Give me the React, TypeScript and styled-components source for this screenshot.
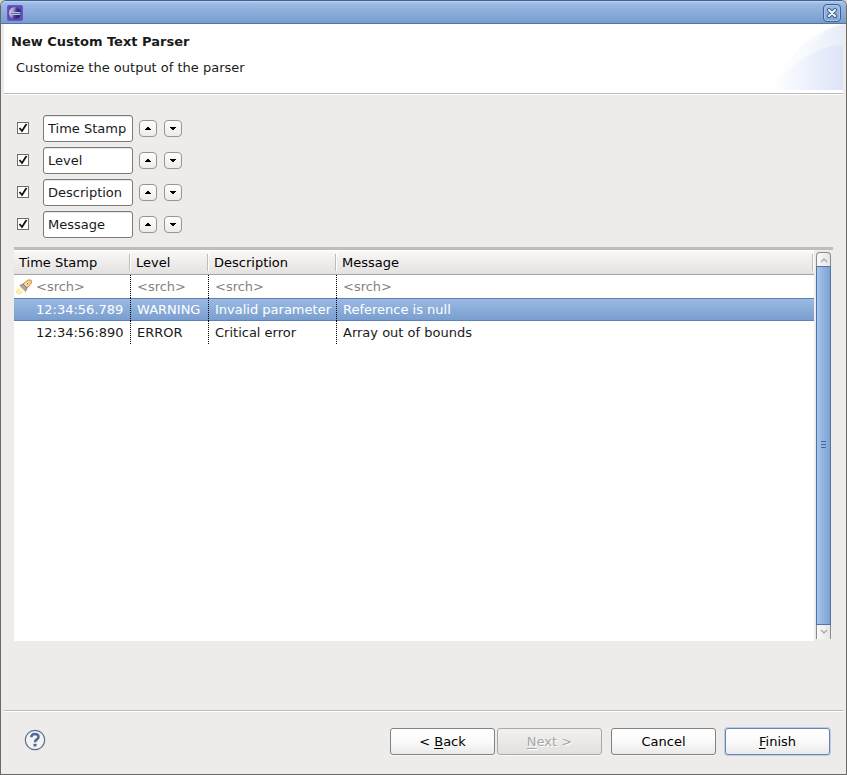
import React, { useState } from "react";
import styled, { createGlobalStyle, css } from "styled-components";

const GlobalStyle = createGlobalStyle`
  *, *::before, *::after { box-sizing: border-box; }
  body { margin: 0; background: #d8d4d0; }
  body, button, input, table {
    font-family: "DejaVu Sans", sans-serif;
    font-size: 13px;
    line-height: 16px;
    color: #1a1a1a;
  }
`;

const Dialog = styled.div`
  display: flex;
  flex-direction: column;
  min-height: 100vh;
  background: #edeceb;
  border: 1px solid #6b6967;
  border-top-color: #45618a;
  border-radius: 6px 6px 0 0;
  overflow: hidden;
`;

const TitleBar = styled.header`
  display: flex;
  align-items: center;
  justify-content: space-between;
  height: 23px;
  padding: 0 5px 0 6px;
  background: linear-gradient(#a5c3ec, #98b8e2 3px, #789dce);
  border-top: 1px solid #b9d0f0;
  border-bottom: 1px solid #4f76ac;
`;

const CloseButton = styled.button`
  display: flex;
  align-items: center;
  justify-content: center;
  width: 18px;
  height: 18px;
  padding: 0;
  background: linear-gradient(#9dbce6, #7fa3d4);
  border: 1px solid #41628f;
  border-radius: 4px;
  box-shadow: inset 0 0 0 1px #a9c5eb;
`;

const Body = styled.main`
  display: flex;
  flex: 1;
  flex-direction: column;
  margin: 0 3px;
`;

const Banner = styled.section`
  display: flex;
  justify-content: space-between;
  height: 70px;
  background: #fff;
  border-bottom: 1px solid #bcbab8;
  box-shadow: 0 1px #fff;
`;

const BannerText = styled.div`
  padding: 10px 0 0 7px;
`;

const Heading = styled.h1`
  margin: 0;
  font-size: 13px;
  line-height: 16px;
`;

const Subtitle = styled.p`
  margin: 10px 0 0 5px;
`;

const Columns = styled.section`
  display: flex;
  flex-direction: column;
  gap: 5px;
  padding: 21px 0 0 13px;
`;

const ColumnRow = styled.div`
  display: flex;
  align-items: center;
  height: 27px;
`;

const Tick = styled.input`
  appearance: none;
  width: 12px;
  height: 12px;
  margin: 0;
  background: #fff;
  border: 1px solid #6f6d6b;
`;

const TickBox = styled.span`
  display: grid;
  flex: none;
  width: 26px;
  margin-bottom: 2px;

  > * { grid-area: 1 / 1; }
  > svg { pointer-events: none; }
  input:not(:checked) + svg { visibility: hidden; }
`;

const NameInput = styled.input`
  width: 90px;
  height: 27px;
  padding: 0 4px;
  background: #fff;
  border: 1px solid #7b7977;
  border-radius: 3px;
  outline: none;
  box-shadow: inset 0 1px #e6e5e4;
`;

const ArrowButton = styled.button`
  display: flex;
  align-items: center;
  justify-content: center;
  width: 18px;
  height: 17px;
  margin: 0 0 1px 7px;
  padding: 0;
  background: linear-gradient(#fff, #ecebea);
  border: 1px solid #979593;
  border-radius: 4px;

  &:first-of-type { margin-left: 6px; }
`;

const Preview = styled.section`
  display: flex;
  flex: 1;
  flex-direction: column;
  margin: 9px 10px 69px;
  border-top: 3px solid #bebdbc;
`;

const PreviewBody = styled.div`
  display: flex;
  flex: 1;
`;

const TableArea = styled.div`
  flex: 1;
  background: #fff;
`;

const Grid = styled.table`
  width: 100%;
  table-layout: fixed;
  border-collapse: separate;
  border-spacing: 0;
`;

const HeadCell = styled.th`
  height: 25px;
  padding: 2px 5px 0;
  font-weight: 400;
  text-align: left;
  color: #000;
  background:
    linear-gradient(#bfbdbb, #bfbdbb) right 1px top 4px / 1px 17px no-repeat,
    linear-gradient(#fff, #fff) right top 4px / 1px 17px no-repeat,
    linear-gradient(#fff 1px, #f8f7f6 2px, #e4e2e0);
  border-bottom: 1px solid #a5a3a0;
`;

const Cell = styled.td`
  height: 23px;
  padding: 0 0 0 6px;
  white-space: nowrap;
  border-right: 1px dotted #000;

  &:first-child { padding-left: 22px; }
  &:last-child { border-right: 0; }
`;

const DataRow = styled.tr<{ $selected?: boolean; $search?: boolean }>`
  ${(p) =>
    p.$selected &&
    css`
      color: #fff;
      ${Cell} {
        background: linear-gradient(
          #5c81b4 1px, #9bbae4 1px, #799ece 22px, #5c81b4 22px
        ) border-box;
      }
    `}
  ${(p) =>
    p.$search &&
    css`
      color: #858381;
      ${Cell}:first-child { padding-left: 2px; }
    `}
`;

const SearchLabel = styled.span`
  display: flex;
  align-items: center;
  gap: 4px;
`;

const ScrollTrack = styled.div`
  display: flex;
  flex-direction: column;
  width: 15px;
  margin: 2px;
`;

const ScrollButton = styled.button<{ $down?: boolean }>`
  display: flex;
  align-items: center;
  justify-content: center;
  height: 14px;
  padding: 0;
  background: linear-gradient(90deg, #fafafa, #e7e6e5);
  border: 1px solid #8d8b89;
  border-width: ${(p) => (p.$down ? "0 1px" : "1px 1px 0")};
  border-radius: ${(p) => (p.$down ? "0" : "4px 4px 0 0")};
`;

const ScrollThumb = styled.div`
  display: flex;
  flex: 1;
  align-items: center;
  justify-content: center;
  padding-bottom: 2px;
  background: linear-gradient(90deg, #a9c6ee, #9dbce6 3px, #7da2d3);
  border: 1px solid #53749f;
`;

const Footer = styled.footer`
  display: flex;
  align-items: center;
  height: 64px;
  padding: 0 13px 0 20px;
  border-top: 1px solid #bcbab8;
  box-shadow: inset 0 1px #fff;
`;

const HelpButton = styled.button`
  display: flex;
  margin: 0 auto 5px 0;
  padding: 0;
  background: none;
  border: 0;
`;

const Buttons = styled.div`
  display: flex;
  gap: 9px;
  margin-bottom: 2px;
`;

const Pager = styled.div`
  display: flex;
  gap: 2px;
`;

const ActionButton = styled.button<{ $primary?: boolean }>`
  width: 105px;
  height: 27px;
  padding: 0;
  color: #000;
  background: linear-gradient(#fff, #fafafa 50%, #ebeae9);
  border: 1px solid ${(p) => (p.$primary ? "#6585b3" : "#84827f")};
  border-radius: 3px;
  box-shadow: ${(p) => (p.$primary ? "0 0 0 1px #bccce3" : "0 1px #f8f8f7")};

  &:disabled {
    color: #a9a7a5;
    text-shadow: 1px 1px #fff;
    background: linear-gradient(#f2f1f0, #e3e1e0);
    border-color: #aaa8a6;
  }
`;

const Mnemonic = styled.span`
  text-decoration: underline;
  text-underline-offset: 2px;
`;

const EclipseLogo = () => (
  <svg width="16" height="16" viewBox="0 0 16 16" aria-hidden="true">
    <defs>
      <linearGradient id="orb" x2="1" y2=".3">
        <stop offset="0" stopColor="#f0d3dd" />
        <stop offset=".35" stopColor="#b9a5cf" />
        <stop offset=".65" stopColor="#403c88" />
        <stop offset="1" stopColor="#232060" />
      </linearGradient>
    </defs>
    <rect x=".5" y=".5" width="15" height="15" rx="1" fill="#5e4cb8" stroke="#6e54cc" />
    <circle cx="8" cy="8" r="6" fill="url(#orb)" />
    <path d="M4 7.500h9.500M4 9.500h9.500" stroke="#b4c6e8" />
    <path d="M4 8.500h9.500" stroke="#5f5fa8" />
  </svg>
);

const CloseIcon = () => (
  <svg width="12" height="12" viewBox="0 0 12 12" aria-hidden="true">
    <path d="M3 3l6 6M9 3l-6 6" stroke="#41628f" strokeWidth="4" strokeLinecap="round" />
    <path d="M3 3l6 6M9 3l-6 6" stroke="#f2f6fc" strokeWidth="2" strokeLinecap="round" />
  </svg>
);

const BannerArt = () => (
  <svg width="75" height="66" viewBox="0 0 75 66" aria-hidden="true">
    <defs>
      <linearGradient id="back">
        <stop offset="0" stopColor="#fff" />
        <stop offset="1" stopColor="#e6ecf9" />
      </linearGradient>
      <linearGradient id="front">
        <stop offset="0" stopColor="#fff" />
        <stop offset=".4" stopColor="#f1f5fd" />
        <stop offset="1" stopColor="#dce4f7" />
      </linearGradient>
    </defs>
    <path d="M2 66C20 32 43 6 75 0V66Z" fill="url(#back)" opacity=".55" />
    <path d="M30 48C42 22 55 4 75 1V66H20Z" fill="url(#back)" />
    <path d="M2 66C20 44 45 22 75 21V66Z" fill="url(#front)" />
  </svg>
);

const TickMark = () => (
  <svg width="14" height="12" viewBox="0 0 14 12" aria-hidden="true">
    <path d="M2.500 6L5 9L9.500 2" fill="none" stroke="#111" strokeWidth="1.800" />
  </svg>
);

const Triangle = ({ down }: { down?: boolean }) => (
  <svg width="6" height="3" viewBox="0 0 6 3" aria-hidden="true">
    <path
      d={down ? "M0 0H6V1H5V2H4V3H2V2H1V1H0Z" : "M0 3H6V2H5V1H4V0H2V1H1V2H0Z"}
      fill="#000"
    />
  </svg>
);

const Chevron = ({ down }: { down?: boolean }) => (
  <svg width="8" height="6" viewBox="0 0 8 6" aria-hidden="true">
    <path
      d={down ? "M1 1L4 4L7 1" : "M1 5L4 2L7 5"}
      fill="none"
      stroke="#b0aeac"
      strokeWidth="1.500"
    />
  </svg>
);

const Grip = () => (
  <svg width="5" height="8" viewBox="0 0 5 8" aria-hidden="true">
    <path d="M0 .5h5M0 3.500h5M0 6.500h5" stroke="#46689a" />
  </svg>
);

const Flashlight = () => (
  <svg width="16" height="16" viewBox="0 0 16 16" aria-hidden="true">
    <path d="M0 10L4 8L8 12L6 14L0 15Z" fill="#fff6c4" />
    <path d="M0 14L3 11M2 15L6 13" stroke="#efd96b" />
    <path d="M7 5L12 1L15 1L15.500 4L11 9Z" fill="#f7cf88" stroke="#c39049" />
    <path d="M9 5.500L13 2.500" stroke="#fff0c8" />
    <path d="M4 6.500L7 5L11 9L9.500 12.500Z" fill="#aaa4ae" stroke="#8a8085" />
    <path d="M4 6.500L9.500 12.500" stroke="#e3bc70" />
    <path d="M11 4l1 1" stroke="#6e5a50" />
  </svg>
);

const HelpIcon = () => (
  <svg width="22" height="22" viewBox="0 0 22 22" aria-hidden="true">
    <circle cx="11" cy="11" r="9.700" fill="#f4f4f4" stroke="#5a7090" strokeWidth="1.200" />
    <path
      d="M7.300 8.300C7.300 4 14.500 3.900 14.500 7.900C14.500 10.500 11 10.200 11 13.200"
      fill="none"
      stroke="#536b94"
      strokeWidth="2.600"
    />
    <rect x="9.500" y="14.700" width="3" height="2.800" rx=".5" fill="#536b94" />
  </svg>
);

const COLUMNS = ["Time Stamp", "Level", "Description", "Message"];
const ROWS = [
  ["12:34:56.789", "WARNING", "Invalid parameter", "Reference is null"],
  ["12:34:56:890", "ERROR", "Critical error", "Array out of bounds"],
];

export default function App() {
  const [selected, setSelected] = useState(0);

  return (
    <Dialog role="dialog" aria-labelledby="dialog-title">
      <GlobalStyle />
      <TitleBar>
        <EclipseLogo />
        <CloseButton aria-label="Close"><CloseIcon /></CloseButton>
      </TitleBar>
      <Body>
        <Banner>
          <BannerText>
            <Heading id="dialog-title">New Custom Text Parser</Heading>
            <Subtitle>Customize the output of the parser</Subtitle>
          </BannerText>
          <BannerArt />
        </Banner>
        <Columns>
          {COLUMNS.map((name) => (
            <ColumnRow key={name}>
              <TickBox>
                <Tick type="checkbox" defaultChecked aria-label={`Show ${name}`} />
                <TickMark />
              </TickBox>
              <NameInput defaultValue={name} aria-label={`${name} column name`} />
              <ArrowButton aria-label={`Move ${name} up`}><Triangle /></ArrowButton>
              <ArrowButton aria-label={`Move ${name} down`}><Triangle down /></ArrowButton>
            </ColumnRow>
          ))}
        </Columns>
        <Preview>
          <PreviewBody>
            <TableArea>
              <Grid>
                <colgroup>
                  <col width="117" />
                  <col width="78" />
                  <col width="128" />
                  <col />
                </colgroup>
                <thead>
                  <tr>
                    {COLUMNS.map((name) => <HeadCell key={name} scope="col">{name}</HeadCell>)}
                  </tr>
                </thead>
                <tbody>
                  <DataRow $search>
                    {COLUMNS.map((name, i) => (
                      <Cell key={name}>
                        <SearchLabel>{i === 0 && <Flashlight />}&lt;srch&gt;</SearchLabel>
                      </Cell>
                    ))}
                  </DataRow>
                  {ROWS.map((row, i) => (
                    <DataRow key={row[0]} $selected={i === selected} onClick={() => setSelected(i)}>
                      {row.map((value) => <Cell key={value}>{value}</Cell>)}
                    </DataRow>
                  ))}
                </tbody>
              </Grid>
            </TableArea>
            <ScrollTrack>
              <ScrollButton aria-label="Scroll up"><Chevron /></ScrollButton>
              <ScrollThumb><Grip /></ScrollThumb>
              <ScrollButton $down aria-label="Scroll down"><Chevron down /></ScrollButton>
            </ScrollTrack>
          </PreviewBody>
        </Preview>
        <Footer>
          <HelpButton aria-label="Help"><HelpIcon /></HelpButton>
          <Buttons>
            <Pager>
              <ActionButton>&lt; <Mnemonic>B</Mnemonic>ack</ActionButton>
              <ActionButton disabled><Mnemonic>N</Mnemonic>ext &gt;</ActionButton>
            </Pager>
            <ActionButton>Cancel</ActionButton>
            <ActionButton $primary><Mnemonic>F</Mnemonic>inish</ActionButton>
          </Buttons>
        </Footer>
      </Body>
    </Dialog>
  );
}
